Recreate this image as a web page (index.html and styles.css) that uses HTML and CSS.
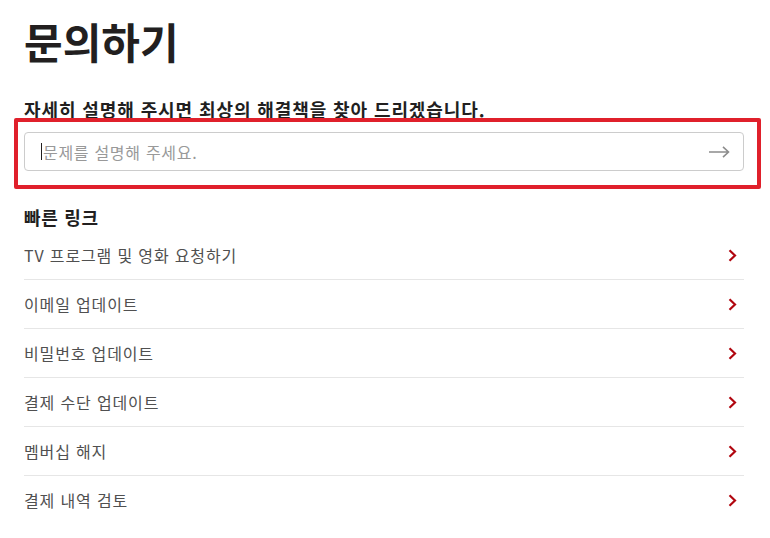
FILE: index.html
```html
<!DOCTYPE html>
<html lang="ko">
<head>
<meta charset="utf-8">
<title>문의하기</title>
<link rel="stylesheet" href="styles.css">
</head>
<body>
<main class="page">
  <h1 class="title">문의하기</h1>
  <h2 class="subtitle">자세히 설명해 주시면 최상의 해결책을 찾아 드리겠습니다.</h2>
  <div class="search-wrap">
    <div class="highlight"></div>
    <div class="search-field">
      <span class="caret"></span>
      <span class="placeholder">문제를 설명해 주세요.</span>
      <svg class="arrow" width="21" height="12" viewBox="0 0 21 12" aria-hidden="true">
        <path d="M0 6H19.5M14 0.8L19.5 6L14 11.2" fill="none" stroke="#8c8c8c" stroke-width="1.6"/>
      </svg>
    </div>
  </div>
  <h3 class="links-title">빠른 링크</h3>
  <ul class="links">
    <li class="link-row"><span>TV 프로그램 및 영화 요청하기</span><svg class="chev" width="9" height="13" viewBox="0 0 9 13"><path d="M1.5 1.2L7 6.5L1.5 11.8" fill="none" stroke="#b1060f" stroke-width="2.2"/></svg></li>
    <li class="link-row"><span>이메일 업데이트</span><svg class="chev" width="9" height="13" viewBox="0 0 9 13"><path d="M1.5 1.2L7 6.5L1.5 11.8" fill="none" stroke="#b1060f" stroke-width="2.2"/></svg></li>
    <li class="link-row"><span>비밀번호 업데이트</span><svg class="chev" width="9" height="13" viewBox="0 0 9 13"><path d="M1.5 1.2L7 6.5L1.5 11.8" fill="none" stroke="#b1060f" stroke-width="2.2"/></svg></li>
    <li class="link-row"><span>결제 수단 업데이트</span><svg class="chev" width="9" height="13" viewBox="0 0 9 13"><path d="M1.5 1.2L7 6.5L1.5 11.8" fill="none" stroke="#b1060f" stroke-width="2.2"/></svg></li>
    <li class="link-row"><span>멤버십 해지</span><svg class="chev" width="9" height="13" viewBox="0 0 9 13"><path d="M1.5 1.2L7 6.5L1.5 11.8" fill="none" stroke="#b1060f" stroke-width="2.2"/></svg></li>
    <li class="link-row"><span>결제 내역 검토</span><svg class="chev" width="9" height="13" viewBox="0 0 9 13"><path d="M1.5 1.2L7 6.5L1.5 11.8" fill="none" stroke="#b1060f" stroke-width="2.2"/></svg></li>
  </ul>
</main>
</body>
</html>
```
FILE: styles.css
```css
html, body {
  margin: 0;
  padding: 0;
  background: #ffffff;
}
body {
  font-family: "Noto Sans CJK KR", "Noto Sans", sans-serif;
  color: #221f1f;
}
.page {
  width: 720px;
  padding: 0 26px 0 24px;
}
.title {
  margin: 16px 0 0;
  font-size: 42px;
  line-height: 50px;
  font-weight: 700;
  letter-spacing: 0;
}
.subtitle {
  margin: 31px 0 0;
  font-size: 18px;
  line-height: 24px;
  font-weight: 700;
  letter-spacing: 0.9px;
}
.search-wrap {
  position: relative;
  margin-top: 11px;
}
.highlight {
  position: absolute;
  top: -14px;
  left: -10px;
  right: -17px;
  bottom: -18px;
  border: 4px solid #e0202b;
  border-radius: 2px;
  pointer-events: none;
}
.search-field {
  height: 37px;
  border: 1px solid #cccccc;
  border-radius: 4px;
  display: flex;
  align-items: center;
  padding: 0 13px 0 16px;
}
.caret {
  width: 1px;
  height: 17px;
  background: #221f1f;
  margin-right: 1px;
}
.placeholder {
  flex: 1;
  font-size: 16px;
  color: #999999;
  letter-spacing: 0.7px;
}
.arrow {
  display: block;
}
.links-title {
  margin: 34px 0 2px;
  font-size: 18px;
  line-height: 24px;
  font-weight: 700;
  letter-spacing: 0.7px;
}
.links {
  list-style: none;
  margin: 0;
  padding: 0;
}
.link-row {
  height: 48px;
  display: flex;
  align-items: center;
  justify-content: space-between;
  padding-right: 7px;
  border-bottom: 1px solid #e6e6e6;
  font-size: 16px;
  color: #505050;
  letter-spacing: 0.85px;
}
.link-row:last-child {
  border-bottom: none;
}
.chev {
  display: block;
}
```
